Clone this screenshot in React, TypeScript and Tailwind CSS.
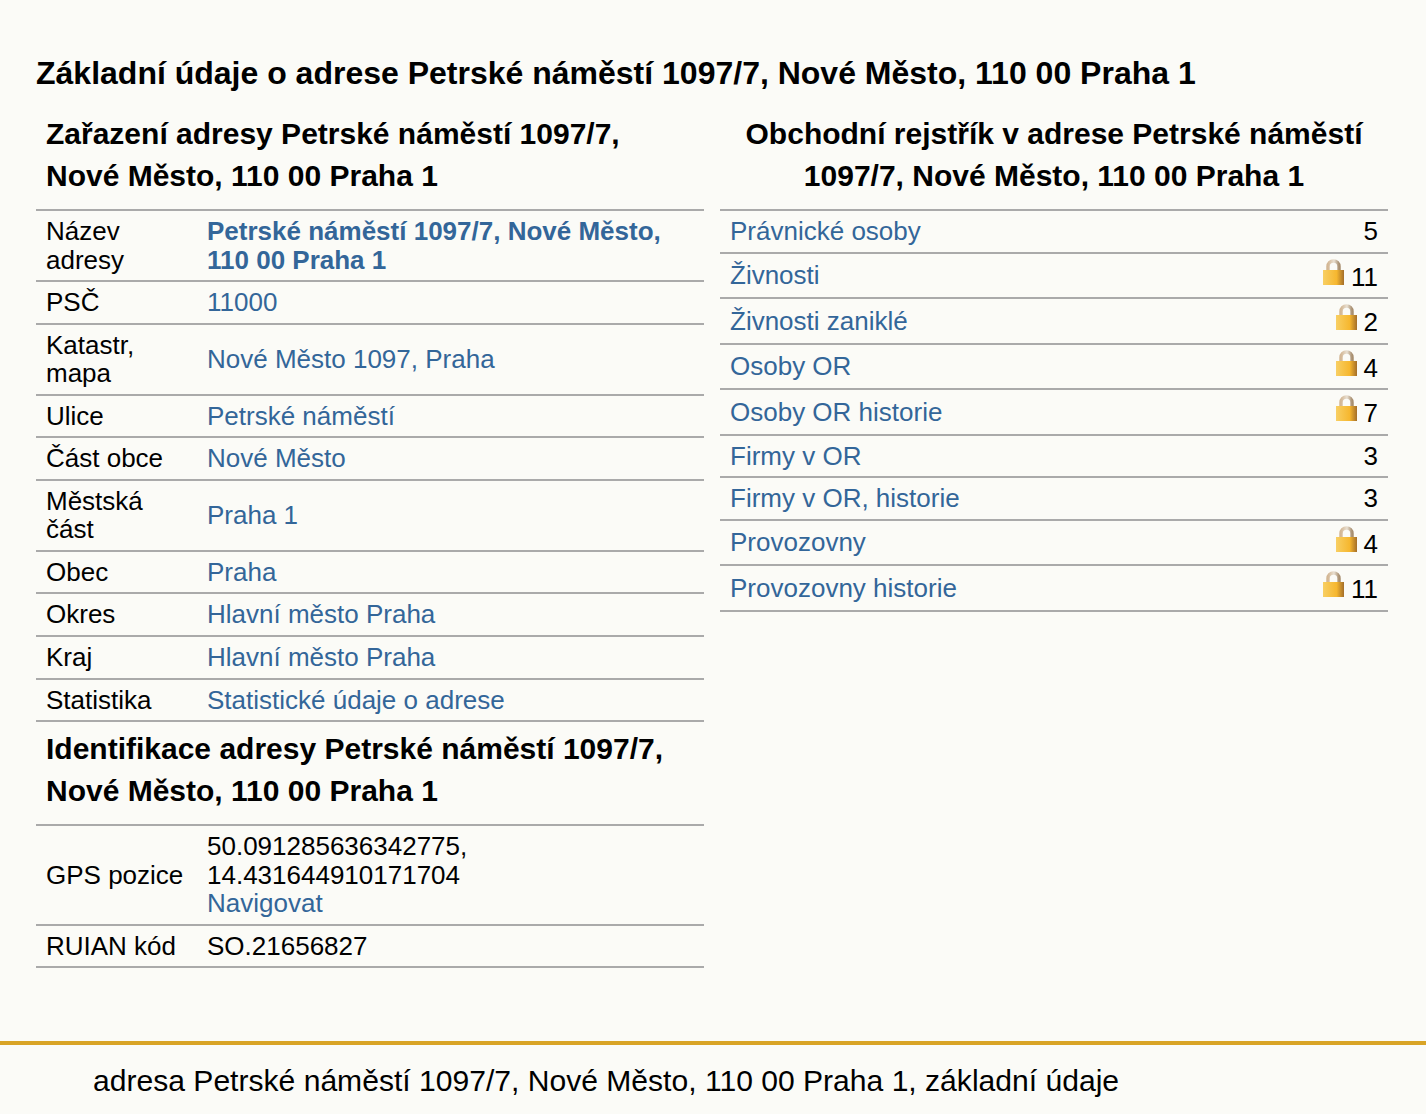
const leftRows = [
  { label: 'Název adresy', value: 'Petrské náměstí 1097/7, Nové Město, 110 00 Praha 1', bold: true },
  { label: 'PSČ', value: '11000' },
  { label: 'Katastr, mapa', value: 'Nové Město 1097, Praha' },
  { label: 'Ulice', value: 'Petrské náměstí' },
  { label: 'Část obce', value: 'Nové Město' },
  { label: 'Městská část', value: 'Praha 1' },
  { label: 'Obec', value: 'Praha' },
  { label: 'Okres', value: 'Hlavní město Praha' },
  { label: 'Kraj', value: 'Hlavní město Praha' },
  { label: 'Statistika', value: 'Statistické údaje o adrese' },
]

const rightRows = [
  { label: 'Právnické osoby', count: 5 },
  { label: 'Živnosti', count: 11, lock: true },
  { label: 'Živnosti zaniklé', count: 2, lock: true },
  { label: 'Osoby OR', count: 4, lock: true },
  { label: 'Osoby OR historie', count: 7, lock: true },
  { label: 'Firmy v OR', count: 3 },
  { label: 'Firmy v OR, historie', count: 3 },
  { label: 'Provozovny', count: 4, lock: true },
  { label: 'Provozovny historie', count: 11, lock: true },
]

function Lock() {
  return (
    <svg width="21" height="26" viewBox="0 0 21 26" className="inline-block align-baseline mr-[7px] -translate-y-px">
      <defs>
        <linearGradient id="lockBody" x1="0" y1="0" x2="1" y2="0">
          <stop offset="0" stopColor="#f8cf63" />
          <stop offset="0.65" stopColor="#f6b72f" />
          <stop offset="1" stopColor="#a46e29" />
        </linearGradient>
        <linearGradient id="lockShackle" x1="0" y1="0" x2="1" y2="0">
          <stop offset="0" stopColor="#d3b795" />
          <stop offset="0.55" stopColor="#e9e0d2" />
          <stop offset="1" stopColor="#a88f70" />
        </linearGradient>
      </defs>
      <path d="M5 12V7.5a5.5 5.5 0 0 1 11 0V12" fill="none" stroke="url(#lockShackle)" strokeWidth="3.5" />
      <rect x="0" y="11" width="21" height="15" fill="url(#lockBody)" />
    </svg>
  )
}

export default function App() {
  return (
    <div className="min-h-[1114px] bg-[#fbfbf7] text-black font-['Liberation_Sans',Arial,sans-serif] text-[26px] leading-[28.55px]">
      <div className="px-9 pt-[37px]">
        <h1 className="text-[32px] font-bold leading-[73px]">
          Základní údaje o adrese Petrské náměstí 1097/7, Nové Město, 110 00 Praha 1
        </h1>
        <div className="grid grid-cols-2 gap-4 mr-[2px]">
          <div>
            <h2 className="px-[10px] text-[30px] font-bold leading-[42px] pt-[3px] pb-[12px]">
              Zařazení adresy Petrské náměstí 1097/7, Nové Město, 110 00 Praha 1
            </h2>
            <table className="w-full border-t-2 border-[#aaaaaa]">
              <tbody>
                {leftRows.map((row) => (
                  <tr key={row.label} className="border-b-2 border-[#aaaaaa]">
                    <td className="w-[171px] min-w-[171px] max-w-[171px] pl-[10px] pr-[20px] py-[6px] align-middle">
                      {row.label}
                    </td>
                    <td className={`pr-[10px] py-[6px] align-middle text-[#336699] ${row.bold ? 'font-bold' : ''}`}>
                      {row.value}
                    </td>
                  </tr>
                ))}
              </tbody>
            </table>
            <h2 className="px-[10px] text-[30px] font-bold leading-[42px] pb-[12px] pt-[6px]">
              Identifikace adresy Petrské náměstí 1097/7, Nové Město, 110 00 Praha 1
            </h2>
            <table className="w-full border-t-2 border-[#aaaaaa]">
              <tbody>
                <tr className="border-b-2 border-[#aaaaaa]">
                  <td className="w-[171px] min-w-[171px] max-w-[171px] pl-[10px] pr-[20px] py-[6px] align-middle">
                    GPS pozice
                  </td>
                  <td className="pr-[10px] py-[6px]">
                    50.091285636342775,
                    <br />
                    14.431644910171704
                    <br />
                    <span className="text-[#336699]">Navigovat</span>
                  </td>
                </tr>
                <tr className="border-b-2 border-[#aaaaaa]">
                  <td className="pl-[10px] pr-[20px] py-[6px]">RUIAN kód</td>
                  <td className="pr-[10px] py-[6px]">SO.21656827</td>
                </tr>
              </tbody>
            </table>
          </div>
          <div>
            <h2 className="px-[10px] text-center text-[30px] font-bold leading-[42px] pt-[3px] pb-[12px]">
              Obchodní rejstřík v adrese Petrské náměstí 1097/7, Nové Město, 110 00 Praha 1
            </h2>
            <table className="w-full border-t-2 border-[#aaaaaa]">
              <tbody>
                {rightRows.map((row) => (
                  <tr key={row.label} className="border-b-2 border-[#aaaaaa]">
                    <td className="px-[10px] py-[6px] align-middle text-[#336699]">{row.label}</td>
                    <td className="px-[10px] py-[6px] align-middle text-right whitespace-nowrap">
                      {row.lock && <Lock />}
                      {row.count}
                    </td>
                  </tr>
                ))}
              </tbody>
            </table>
          </div>
        </div>
      </div>
      <footer className="mt-[73px] border-t-4 border-[#d9a426] pl-[93px] pt-[18px] pb-[16px] text-[30.08px] leading-[35px]">
        adresa Petrské náměstí 1097/7, Nové Město, 110 00 Praha 1, základní údaje
      </footer>
    </div>
  )
}
